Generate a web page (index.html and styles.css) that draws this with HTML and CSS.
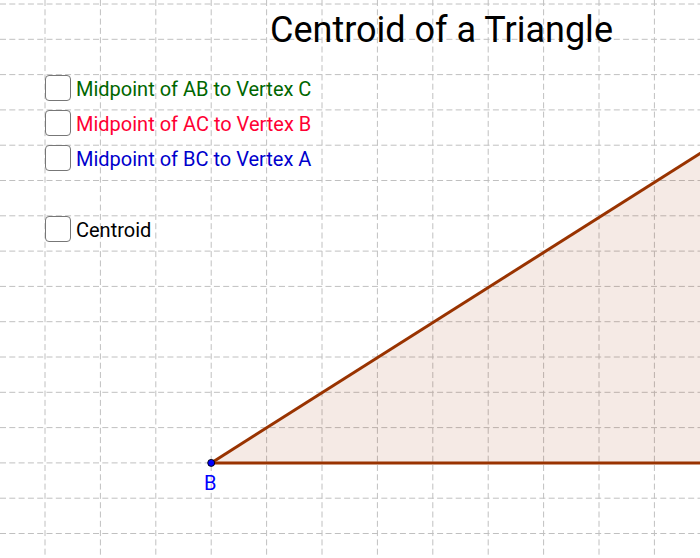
FILE: index.html
```html
<!DOCTYPE html>
<html>
<head>
<meta charset="utf-8">
<link rel="stylesheet" href="styles.css">
</head>
<body>
<div class="stage">
  <svg class="canvas" width="700" height="558" viewBox="0 0 700 558" xmlns="http://www.w3.org/2000/svg">
    <g class="grid-v" stroke="#c0c0c0" stroke-width="1" stroke-dasharray="6 3.3">
      <line x1="45" y1="0" x2="45" y2="558"/>
      <line x1="100.4" y1="0" x2="100.4" y2="558"/>
      <line x1="155.8" y1="0" x2="155.8" y2="558"/>
      <line x1="211.2" y1="0" x2="211.2" y2="558"/>
      <line x1="266.6" y1="0" x2="266.6" y2="558"/>
      <line x1="322" y1="0" x2="322" y2="558"/>
      <line x1="377.4" y1="0" x2="377.4" y2="558"/>
      <line x1="432.8" y1="0" x2="432.8" y2="558"/>
      <line x1="488.2" y1="0" x2="488.2" y2="558"/>
      <line x1="543.6" y1="0" x2="543.6" y2="558"/>
      <line x1="599" y1="0" x2="599" y2="558"/>
      <line x1="654.4" y1="0" x2="654.4" y2="558"/>
    </g>
    <g class="grid-h" stroke="#c0c0c0" stroke-width="1" stroke-dasharray="6 3.3">
      <line x1="0" y1="4" x2="700" y2="4"/>
      <line x1="0" y1="39.3" x2="700" y2="39.3"/>
      <line x1="0" y1="74.6" x2="700" y2="74.6"/>
      <line x1="0" y1="109.9" x2="700" y2="109.9"/>
      <line x1="0" y1="145.2" x2="700" y2="145.2"/>
      <line x1="0" y1="180.5" x2="700" y2="180.5"/>
      <line x1="0" y1="215.8" x2="700" y2="215.8"/>
      <line x1="0" y1="251.1" x2="700" y2="251.1"/>
      <line x1="0" y1="286.4" x2="700" y2="286.4"/>
      <line x1="0" y1="321.7" x2="700" y2="321.7"/>
      <line x1="0" y1="357" x2="700" y2="357"/>
      <line x1="0" y1="392.3" x2="700" y2="392.3"/>
      <line x1="0" y1="427.6" x2="700" y2="427.6"/>
      <line x1="0" y1="462.9" x2="700" y2="462.9"/>
      <line x1="0" y1="498.2" x2="700" y2="498.2"/>
      <line x1="0" y1="533.5" x2="700" y2="533.5"/>
    </g>
    <polygon points="211.2,462.9 710,147.2 710,462.9" fill="#993300" fill-opacity="0.1"/>
    <line x1="211.2" y1="462.9" x2="710" y2="147.2" stroke="#993300" stroke-width="3"/>
    <line x1="211.2" y1="462.9" x2="710" y2="462.9" stroke="#993300" stroke-width="3"/>
    <circle cx="211.2" cy="462.9" r="3.5" fill="#0000ff" stroke="#000" stroke-width="0.9"/>
    <text class="pt-label" x="204" y="490">B</text>
  </svg>

  <h1 class="title">Centroid of a Triangle</h1>

  <div class="controls">
    <label class="row"><span class="box"></span><span class="txt green">Midpoint of AB to Vertex C</span></label>
    <label class="row"><span class="box"></span><span class="txt red">Midpoint of AC to Vertex B</span></label>
    <label class="row"><span class="box"></span><span class="txt blue">Midpoint of BC to Vertex A</span></label>
    <label class="row row-gap"><span class="box"></span><span class="txt black">Centroid</span></label>
  </div>
</div>
</body>
</html>
```

FILE: styles.css
```css
html, body {
  margin: 0;
  padding: 0;
  background: #ffffff;
}

body {
  font-family: Roboto, "Liberation Sans", sans-serif;
}

.stage {
  position: relative;
  width: 700px;
  height: 558px;
  overflow: hidden;
  background: #ffffff;
}

.canvas {
  position: absolute;
  left: 0;
  top: 0;
  display: block;
}

.pt-label {
  font-family: Roboto, "Liberation Sans", sans-serif;
  font-size: 20px;
  fill: #0000ff;
}

.title {
  position: absolute;
  left: 270px;
  top: 10px;
  margin: 0;
  font-size: 36px;
  font-weight: 400;
  line-height: 40px;
  color: #000000;
  white-space: nowrap;
}

.controls {
  position: absolute;
  left: 45px;
  top: 75px;
  display: flex;
  flex-direction: column;
  gap: 9px;
}

.row {
  display: flex;
  align-items: flex-start;
  gap: 5px;
  height: 26px;
}

.row-gap {
  margin-top: 36px;
}

.box {
  box-sizing: border-box;
  width: 26px;
  height: 26px;
  border: 1.5px solid #777777;
  border-radius: 4px;
  background: #ffffff;
  flex: none;
}

.txt {
  font-size: 20px;
  line-height: 26px;
  padding-top: 1px;
  white-space: nowrap;
}

.green { color: #006600; }
.red { color: #ff0033; }
.blue { color: #0000cc; }
.black { color: #000000; }
```
